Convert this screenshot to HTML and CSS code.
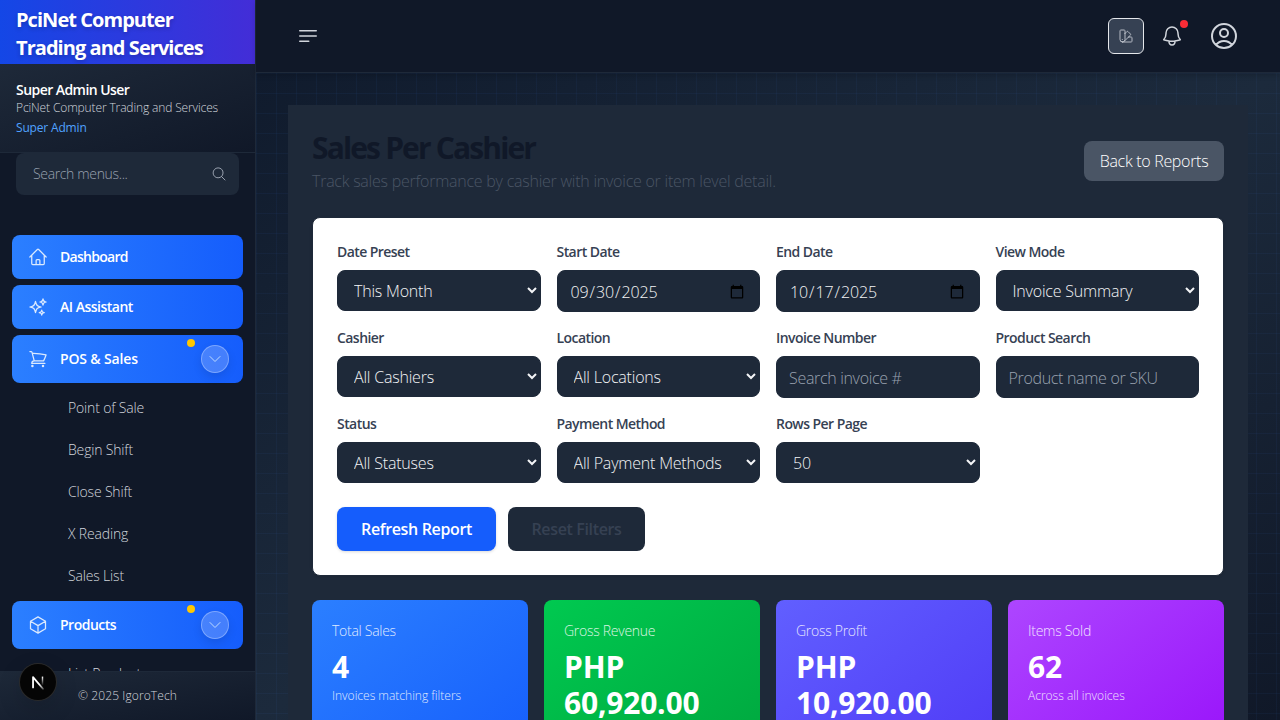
FILE: index.html
```html
<!DOCTYPE html>
<html lang="en">
<head>
<meta charset="utf-8">
<title>Sales Per Cashier</title>
<link rel="stylesheet" href="styles.css">
</head>
<body>
<div class="app">
  <aside class="sidebar">
    <div class="brand"><span class="brand-name">PciNet Computer<br>Trading and Services</span></div>
    <div class="user">
      <div class="user-name">Super Admin User</div>
      <div class="user-company">PciNet Computer Trading and Services</div>
      <div class="user-role">Super Admin</div>
    </div>
    <nav class="nav">
      <div class="search"><span>Search menus...</span>
        <svg class="icon-16" viewBox="0 0 24 24"><path d="m21 21-5.2-5.2m0 0A7.5 7.5 0 1 0 5.2 5.2a7.5 7.5 0 0 0 10.6 10.6Z"/></svg>
      </div>
      <div class="menu">
        <a class="item"><svg class="icon-20" viewBox="0 0 24 24"><path d="m2.25 12 8.954-8.955c.44-.439 1.152-.439 1.591 0L21.75 12M4.5 9.75v10.125c0 .621.504 1.125 1.125 1.125H9.75v-4.875c0-.621.504-1.125 1.125-1.125h2.25c.621 0 1.125.504 1.125 1.125V21h4.125c.621 0 1.125-.504 1.125-1.125V9.75M8.25 21h8.25"/></svg><span>Dashboard</span></a>
        <a class="item"><svg class="icon-20" viewBox="0 0 24 24"><path d="M9.813 15.904 9 18.75l-.813-2.846a4.5 4.5 0 0 0-3.09-3.09L2.25 12l2.846-.813a4.5 4.5 0 0 0 3.09-3.09L9 5.25l.813 2.846a4.5 4.5 0 0 0 3.09 3.09L15.75 12l-2.846.813a4.5 4.5 0 0 0-3.09 3.09ZM18.259 8.715 18 9.75l-.259-1.035a3.375 3.375 0 0 0-2.455-2.456L14.25 6l1.036-.259a3.375 3.375 0 0 0 2.455-2.456L18 2.25l.259 1.035a3.375 3.375 0 0 0 2.456 2.456L21.75 6l-1.035.259a3.375 3.375 0 0 0-2.456 2.456ZM16.894 20.567 16.5 21.75l-.394-1.183a2.25 2.25 0 0 0-1.423-1.423L13.5 18.75l1.183-.394a2.25 2.25 0 0 0 1.423-1.423l.394-1.183.394 1.183a2.25 2.25 0 0 0 1.423 1.423l1.183.394-1.183.394a2.25 2.25 0 0 0-1.423 1.423Z"/></svg><span class="loose">AI Assistant</span></a>
        <a class="item item-group"><svg class="icon-20" viewBox="0 0 24 24"><path d="M2.25 3h1.386c.51 0 .955.343 1.087.835l.383 1.437M7.5 14.25a3 3 0 0 0-3 3h15.75m-12.75-3h11.218c1.121-2.3 2.1-4.684 2.924-7.138a60.114 60.114 0 0 0-16.536-1.84M7.5 14.25 5.106 5.272M6 20.25a.75.75 0 1 1-1.5 0 .75.75 0 0 1 1.5 0Zm12.75 0a.75.75 0 1 1-1.5 0 .75.75 0 0 1 1.5 0Z"/></svg><span class="looser">POS &amp; Sales</span><i class="dot"></i><b class="toggle"><svg class="icon-16" viewBox="0 0 24 24"><path d="m19.5 8.25-7.5 7.5-7.5-7.5"/></svg></b></a>
        <div class="sub">
          <a>Point of Sale</a><a>Begin Shift</a><a>Close Shift</a><a>X Reading</a><a>Sales List</a>
        </div>
        <a class="item item-group"><svg class="icon-20" viewBox="0 0 24 24"><path d="m21 7.5-9-5.25L3 7.5m18 0-9 5.25m9-5.25v9l-9 5.25M3 7.5l9 5.25M3 7.5v9l9 5.25m0-9v9"/></svg><span class="loose">Products</span><i class="dot"></i><b class="toggle"><svg class="icon-16" viewBox="0 0 24 24"><path d="m19.5 8.25-7.5 7.5-7.5-7.5"/></svg></b></a>
        <div class="sub"><a>List Products</a></div>
      </div>
    </nav>
    <footer class="foot">© 2025 IgoroTech</footer>
  </aside>
  <div class="content">
    <header class="topbar">
      <svg class="burger" viewBox="0 0 24 24"><path d="M3.75 6.75h16.5M3.75 12h16.5M3.75 17.25h9"/></svg>
      <div class="actions">
        <button class="theme"><svg class="icon-16" viewBox="0 0 24 24"><path d="M4.098 19.902a3.75 3.75 0 0 0 5.304 0l6.401-6.402M6.75 21A3.75 3.75 0 0 1 3 17.25V4.125C3 3.504 3.504 3 4.125 3h5.25c.621 0 1.125.504 1.125 1.125v4.072M6.75 21a3.75 3.75 0 0 0 3.75-3.75V8.197M6.75 21h13.125c.621 0 1.125-.504 1.125-1.125v-5.25c0-.621-.504-1.125-1.125-1.125h-4.072M10.5 8.197l2.88-2.88c.438-.439 1.15-.439 1.59 0l3.712 3.713c.44.44.44 1.152 0 1.59l-2.879 2.88M6.75 17.25h.008v.008H6.75v-.008Z"/></svg></button>
        <div class="bell"><svg viewBox="0 0 24 24"><path d="M14.857 17.082a23.848 23.848 0 0 0 5.454-1.31A8.967 8.967 0 0 1 18 9.75V9A6 6 0 0 0 6 9v.75a8.967 8.967 0 0 1-2.312 6.022c1.733.64 3.56 1.085 5.455 1.31m5.714 0a24.255 24.255 0 0 1-5.714 0m5.714 0a3 3 0 1 1-5.714 0"/></svg><i></i></div>
        <svg class="avatar" viewBox="0 0 24 24"><path d="M17.982 18.725A7.488 7.488 0 0 0 12 15.75a7.488 7.488 0 0 0-5.982 2.975m11.963 0a9 9 0 1 0-11.963 0m11.963 0A8.966 8.966 0 0 1 12 21a8.966 8.966 0 0 1-5.982-2.275M15 9.75a3 3 0 1 1-6 0 3 3 0 0 1 6 0Z"/></svg>
      </div>
    </header>
    <main class="main">
      <section class="panel">
        <div class="head">
          <div>
            <h1>Sales Per Cashier</h1>
            <p>Track sales performance by cashier with invoice or item level detail.</p>
          </div>
          <button class="back">Back to Reports</button>
        </div>
        <form class="filters">
          <div class="grid">
            <label><span>Date Preset</span><select><option>This Month</option></select></label>
            <label><span>Start Date</span><input type="date" value="2025-09-30"></label>
            <label><span>End Date</span><input type="date" value="2025-10-17"></label>
            <label><span>View Mode</span><select><option>Invoice Summary</option></select></label>
            <label><span>Cashier</span><select><option>All Cashiers</option></select></label>
            <label><span>Location</span><select><option>All Locations</option></select></label>
            <label><span>Invoice Number</span><input type="text" placeholder="Search invoice #"></label>
            <label><span>Product Search</span><input type="text" placeholder="Product name or SKU"></label>
            <label><span>Status</span><select><option>All Statuses</option></select></label>
            <label><span>Payment Method</span><select><option>All Payment Methods</option></select></label>
            <label><span>Rows Per Page</span><select><option>50</option></select></label>
          </div>
          <div class="buttons"><button type="button" class="refresh">Refresh Report</button><button type="button" class="reset">Reset Filters</button></div>
        </form>
        <div class="stats">
          <div class="stat blue"><h2>Total Sales</h2><strong>4</strong><small>Invoices matching filters</small></div>
          <div class="stat green"><h2>Gross Revenue</h2><strong>PHP 60,920.00</strong></div>
          <div class="stat indigo"><h2>Gross Profit</h2><strong>PHP 10,920.00</strong></div>
          <div class="stat purple"><h2>Items Sold</h2><strong>62</strong><small>Across all invoices</small></div>
        </div>
      </section>
    </main>
  </div>
</div>
<div class="devtool"><svg viewBox="0 0 40 40"><defs><linearGradient id="n1" x1="15" y1="14" x2="26" y2="28" gradientUnits="userSpaceOnUse"><stop offset=".6" stop-color="#fff"/><stop offset="1" stop-color="#fff" stop-opacity=".3"/></linearGradient><linearGradient id="n2" x1="0" y1="14" x2="0" y2="24" gradientUnits="userSpaceOnUse"><stop stop-color="#fff"/><stop offset="1" stop-color="#fff" stop-opacity="0"/></linearGradient></defs><path d="M14.5 26V14.5L25.5 27.5" fill="none" stroke="url(#n1)" stroke-width="2"/><path d="M24.2 14h1.6v10h-1.6z" fill="url(#n2)" stroke="none"/></svg></div>
</body>
</html>
```
FILE: styles.css
```css
* { box-sizing: border-box; }
body { margin: 0; height: 720px; overflow: hidden; background: #101828; color: #fff; font: 300 16px/24px "Open Sans", "Noto Sans", sans-serif; }
h1, h2, p { margin: 0; }
button, input, select { font: inherit; }
svg { fill: none; stroke: currentColor; stroke-width: 1.5; stroke-linecap: round; stroke-linejoin: round; flex: none; }
.icon-16 { width: 16px; height: 16px; }
.icon-20 { width: 20px; height: 20px; }
.app { display: flex; height: 720px; }

.sidebar { width: 256px; flex: none; display: flex; flex-direction: column; border-right: 1px solid #1e2939; background: #101828; }
.brand { height: 64px; flex: none; display: flex; align-items: center; padding: 4px 16px 0; background: linear-gradient(to right, #1447e6, #432dd7); }
.brand-name { font-weight: 700; font-size: 20px; line-height: 28px; letter-spacing: -.95px; white-space: nowrap; text-shadow: 0 2px 4px rgba(0,0,0,.2); }
.user { height: 89px; flex: none; padding: 16px; border-bottom: 1px solid #1e2939; background: linear-gradient(to bottom right, #1e2939, #101828); white-space: nowrap; }
.user-name { font-size: 14px; line-height: 20px; font-weight: 600; letter-spacing: -.55px; }
.user-company { font-size: 12px; line-height: 16px; letter-spacing: -.13px; color: #d1d5dc; }
.user-role { margin-top: 4px; font-size: 12px; line-height: 16px; font-weight: 400; letter-spacing: -.17px; color: #51a2ff; }
.nav { flex: 1; min-height: 0; overflow: hidden; }
.search { margin: 0 16px; height: 42px; padding: 0 12px 0 17px; display: flex; align-items: center; justify-content: space-between; border-radius: 8px; background: #1e2939; color: #99a1af; font-size: 14px; letter-spacing: -.35px; }
.menu { padding: 40px 12px 0; }
.item { position: relative; display: flex; align-items: center; gap: 12px; height: 44px; margin-bottom: 6px; padding: 0 14px 0 16px; border-radius: 8px; background: linear-gradient(to right, #2b7fff, #155dfc); font-size: 14px; font-weight: 600; letter-spacing: -.72px; }
.loose { letter-spacing: -.5px; }
.looser { letter-spacing: -.15px; }
.item-group { height: 48px; margin-bottom: 3px; }
.item > svg { color: #dbeafe; }
.dot { position: absolute; top: 4px; right: 48px; width: 8px; height: 8px; border-radius: 50%; background: #ffc800; }
.toggle { margin-left: auto; width: 28px; height: 28px; display: flex; align-items: center; justify-content: center; border: 1px solid rgba(255,255,255,.3); border-radius: 50%; background: rgba(255,255,255,.2); color: #bedbff; box-shadow: 0 4px 10px rgba(0,0,0,.1); }
.sub { display: flex; flex-direction: column; margin-bottom: 5px; }
.sub a { height: 42px; padding-left: 56px; font-size: 14px; line-height: 43px; letter-spacing: -.17px; color: #d1d5dc; }
.foot { height: 49px; flex: none; padding-top: 16px; border-top: 1px solid #1e2939; background: linear-gradient(to bottom right, #1e2939, #101828); text-align: center; font-size: 12px; line-height: 16px; letter-spacing: .1px; color: #d1d5dc; }

.content { flex: 1; min-width: 0; display: flex; flex-direction: column; }
.topbar { position: relative; height: 73px; flex: none; display: flex; align-items: center; justify-content: space-between; padding: 0 40px; border-bottom: 1px solid #1e2939; background: #101828; color: #d1d5dc; box-shadow: 0 2px 6px rgba(0,0,0,.2); }
.burger { width: 24px; height: 24px; }
.actions { display: flex; align-items: center; }
.theme { width: 36px; height: 36px; padding: 0; display: flex; align-items: center; justify-content: center; border: 1px solid #e5e7eb; border-radius: 6px; background: #364153; color: #b5bac4; }
.bell { position: relative; width: 24px; height: 24px; margin-left: 16px; display: flex; }
.bell i { position: absolute; top: -4px; right: -4px; width: 8px; height: 8px; border-radius: 50%; background: #fb2c36; }
.avatar { width: 32px; height: 32px; margin-left: 24px; }
.main { flex: 1; min-height: 0; padding: 32px; overflow: hidden; background: linear-gradient(rgba(59,130,246,.05) 1px, transparent 1px) 0 0 / 20px 20px, linear-gradient(90deg, rgba(59,130,246,.05) 1px, transparent 1px) 0 0 / 20px 20px, linear-gradient(to bottom right, #101b2d, #1c2a3c 50%, #101828); }
.panel { height: 700px; padding: 24px; background: #1e2939; }
.head { display: flex; align-items: center; justify-content: space-between; height: 64px; margin-bottom: 24px; white-space: nowrap; }
.head h1 { font-size: 30px; line-height: 38px; font-weight: 700; letter-spacing: -1.85px; color: #101828; }
.head p { margin-top: 2px; letter-spacing: -.24px; color: #4a5565; }
.back { height: 40px; width: 140px; padding: 0; border: 0; border-radius: 8px; background: #4a5565; color: #fff; letter-spacing: -.3px; }
.filters { padding: 24px; border: 1px solid #1e2939; border-radius: 8px; background: #fff; box-shadow: 0 1px 3px rgba(0,0,0,.1); }
.grid { display: grid; grid-template-columns: repeat(4, 1fr); gap: 16px; align-items: start; }
.grid label { display: flex; flex-direction: column; gap: 8px; }
.grid span { font-size: 14px; line-height: 20px; font-weight: 600; letter-spacing: -.56px; color: #364153; }
select, input { width: 100%; margin: 0; border: 1px solid #1e2939; border-radius: 8px; background: #1e2939; color: #f3f4f6; outline: 0; }
select { height: 41px; padding: 1px 0 0 12px; letter-spacing: -.2px; }
input { height: 42px; padding: 1px 12px 0; letter-spacing: -.1px; }
input::placeholder { color: #99a1af; opacity: 1; letter-spacing: -.32px; }
.buttons { display: flex; gap: 12px; margin-top: 24px; }
.buttons button { height: 44px; padding: 0; border: 0; border-radius: 8px; font-weight: 600; letter-spacing: -.35px; white-space: nowrap; }
.buttons .refresh { width: 159px; background: #155dfc; color: #fff; box-shadow: 0 1px 3px rgba(0,0,0,.15); }
.buttons .reset { width: 137px; background: #1e2939; color: #364153; }
.stats { display: grid; grid-template-columns: repeat(4, 1fr); gap: 16px; margin-top: 24px; }
.stat { height: 168px; padding: 20px; border-radius: 8px; }
.stat h2 { font-size: 14px; line-height: 21px; font-weight: 300; letter-spacing: -.28px; opacity: .85; }
.stat strong { display: block; margin-top: 8px; font-size: 30px; line-height: 36px; font-weight: 700; letter-spacing: -.2px; }
.stat small { display: block; margin-top: 3px; font-size: 12px; line-height: 16px; opacity: .85; }
.blue { background: linear-gradient(to bottom right, #2b7fff, #155dfc); }
.green { background: linear-gradient(to bottom right, #00c950, #00a63e); }
.indigo { background: linear-gradient(to bottom right, #615fff, #4f39f6); }
.purple { background: linear-gradient(to bottom right, #ad46ff, #9810fa); }
.devtool { position: absolute; left: 20px; top: 664px; width: 36px; height: 36px; border-radius: 50%; background: #050505; box-shadow: 0 0 0 1px #2a2a2a, 0 8px 24px rgba(0,0,0,.15); }
.devtool svg { display: block; width: 36px; height: 36px; }
```
